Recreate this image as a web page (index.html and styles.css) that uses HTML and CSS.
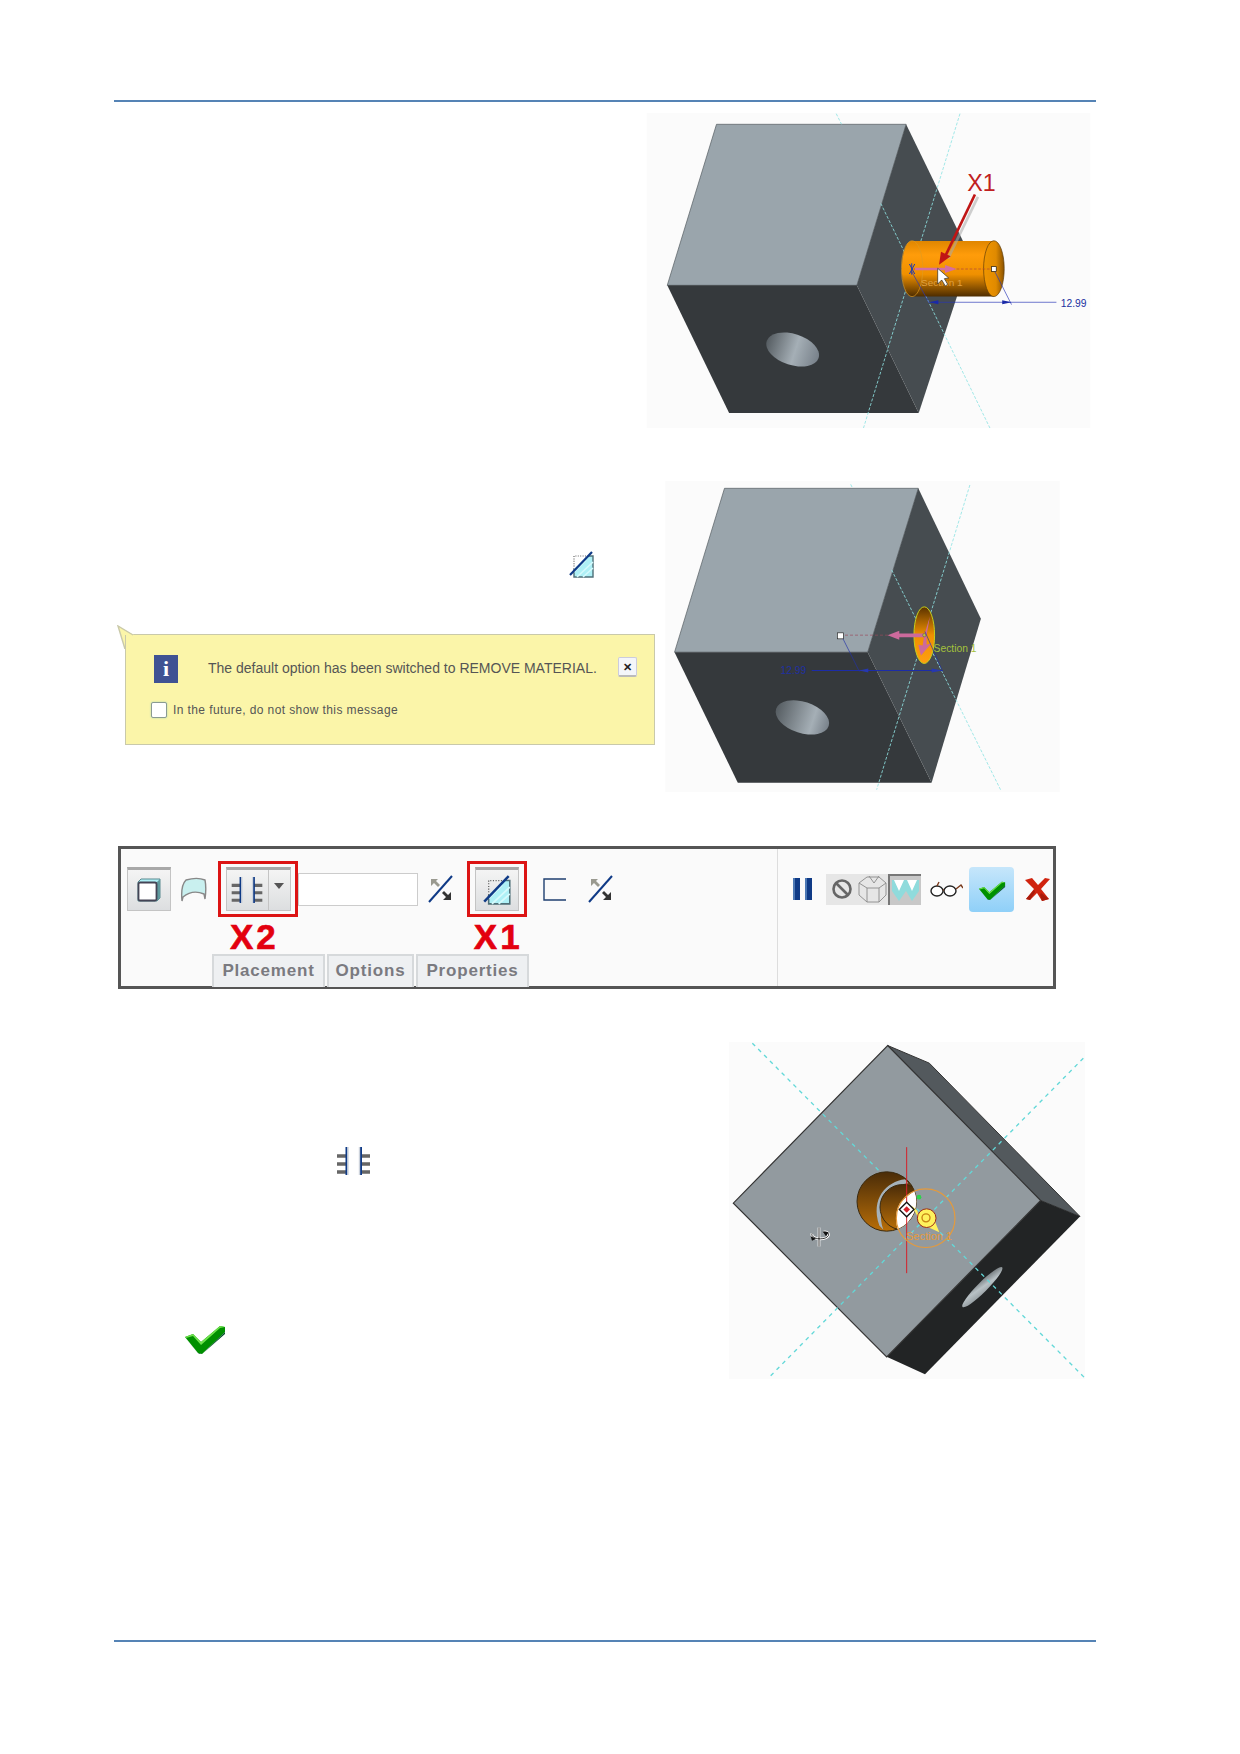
FILE: index.html
```html
<!DOCTYPE html>
<html lang="en">
  <head>
    <meta charset="UTF-8">
    <title>Extrude Cut Steps</title>
    <link rel="stylesheet" href="styles.css">
  </head>
  <body>
    <!-- Shared toolbar icons -->
    <svg class="icon-defs">
      <symbol id="ribs" viewBox="0 0 33 28">
        <path d="M0 9h9M0 17h9M0 25h9M24 9h9M24 17h9M24 25h9" stroke="#666" stroke-width="3.4"/>
        <path d="M9.5 0v28M24 0v28" stroke="#0f3a86" stroke-width="2"/>
        <path d="M11 0v28M22.5 0v28" stroke="#cdd3dc" stroke-width="1.4"/>
      </symbol>
      <symbol id="wedge" viewBox="0 0 25 27">
        <path d="M5 18V5H19" stroke="#666" stroke-width="1.2" stroke-dasharray="1 1.4" fill="none"/>
        <path d="M5 26V18L19 5H24V26z" fill="#aef0f6"/>
        <path d="M5 18V26H24V5H19" fill="none" stroke="#4f6f78" stroke-width="1.4"/>
        <path d="M8 26L24 11M14 26L24 17M5 21L17 9" stroke="#d6fafc" stroke-width="1.6"/>
        <path d="M1 24L23 1" stroke="#0f3a86" stroke-width="2.2"/>
      </symbol>
      <symbol id="flip" viewBox="0 0 25 28">
        <path d="M1 27L24 1" stroke="#0f3a86" stroke-width="2"/>
        <path d="M3 4h7l-2 2 4 4-2 2-4-4-3 3z" fill="#9a9a90"/>
        <path d="M23 25h-8l3-3-4-4 2-2 4 4 3-3z" fill="#333"/>
      </symbol>
      <symbol id="check" viewBox="0 0 40 32">
        <path d="M0 15L8 12L16 20L35 4L40 5V10L17 32L13 31z" fill="#009000"/>
        <path d="M0 15L8 12L16 20L35 4L40 5L35 6L16 23L8 14L1 16z" fill="#6ee24c"/>
        <path d="M0 16L13 31L17 32L40 10V12L17 32H14z" fill="#04502a"/>
      </symbol>
    </svg>

    <div class="page">
      <div class="rule"></div>

      <!-- Step 1 -->
      <section class="step step-one">
        <svg class="fig fig-one" viewBox="18 38 1334 947">
          <defs>
            <linearGradient id="holeA" x1="0" x2="1" y1="0" y2="0">
              <stop offset="0" stop-color="#565d62"/>
              <stop offset=".55" stop-color="#a5afb6"/>
              <stop offset="1" stop-color="#78818a"/>
            </linearGradient>
            <linearGradient id="cyl" x1="0" x2="0" y1="0" y2="1">
              <stop offset="0" stop-color="#e08600"/>
              <stop offset=".25" stop-color="#ff9c0a"/>
              <stop offset=".6" stop-color="#ef9000"/>
              <stop offset="1" stop-color="#4d2c00"/>
            </linearGradient>
            <linearGradient id="cap" x1="0" x2="1" y1="0" y2="0">
              <stop offset="0" stop-color="#f09600"/>
              <stop offset=".6" stop-color="#e08a00"/>
              <stop offset="1" stop-color="#8a5200"/>
            </linearGradient>
          </defs>
          <rect x="18" y="38" width="1334" height="947" fill="#fbfbfb"/>
          <path d="M228 72H798L650 556H80z" fill="#9aa5ac" stroke="#50585c" stroke-width="2"/>
          <path d="M80 556H650L836 940H266z" fill="#35393c"/>
          <path d="M798 72L991 468L836 940L650 556z" fill="#464c50"/>
          <ellipse cx="457" cy="749" rx="82" ry="47" transform="rotate(18 457 749)" fill="url(#holeA)"/>
          <path d="M588 40L604 72M722 310L1050 985M960 40L670 985" stroke="#8fe3e3" stroke-width="2.5" stroke-dasharray="9 5" fill="none"/>
          <path d="M812 423H1062V590H812A30 84 0 0 1 812 423z" fill="url(#cyl)"/>
          <ellipse cx="816" cy="506" rx="32" ry="84" fill="none" stroke="#e09a20" stroke-width="2"/>
          <ellipse cx="1062" cy="506" rx="31" ry="84" fill="url(#cap)" stroke="#5a3a08" stroke-width="2"/>
          <text class="fig-text" x="843" y="558" font-size="30" fill="#e0a040">Section 1</text>
          <path d="M820 507H1060" stroke="#b0443c" stroke-width="2" stroke-dasharray="8 5"/>
          <path d="M825 503H915V495L950 507L915 519V511H825z" fill="#d36fa0"/>
          <path d="M815 490V524M808 492L824 522M824 492L808 522" stroke="#1f3ab0" stroke-width="3"/>
          <path d="M815 515L868 610M1065 515L1115 614M868 607H1250" stroke="#2836b8" stroke-width="2" fill="none"/>
          <path d="M868 607L895 601V613zM1115 607L1087 601V613z" fill="#1a2aa8"/>
          <rect x="1055" y="500" width="14" height="14" fill="#fff" stroke="#111" stroke-width="2"/>
          <text class="fig-text" x="1263" y="620" font-size="31" fill="#2030a0">12.99</text>
          <path d="M893 505V552L905 540L916 558L923 553L913 536L926 534z" fill="#fff" stroke="#222" stroke-width="2"/>
          <path d="M1014 290L924 476" stroke="#aaa" stroke-width="8" opacity=".55"/>
          <path d="M1005 283L915 470" stroke="#c01515" stroke-width="8"/>
          <path d="M897 494L903 455L932 469z" fill="#c01515"/>
          <text class="fig-text" x="982" y="272" font-size="70" fill="#c02020">X1</text>
        </svg>
      </section>

      <!-- Step 2 -->
      <section class="step step-two">
        <div class="step-notes">
          <svg class="wedge-icon"><use href="#wedge"/></svg>
          <div class="note">
            <svg class="note-tail" viewBox="0 0 18 24">
              <path d="M2 1L18 10H14L9 10V24Z" fill="#fbf5a9"/>
              <path d="M9 24L2 1L17 10" fill="none" stroke="#c9c9aa" stroke-width="1.4"/>
            </svg>
            <div class="note-top">
              <span class="note-info">i</span>
              <span class="note-text">The default option has been switched to REMOVE MATERIAL.</span>
              <span class="note-close">✕</span>
            </div>
            <label class="note-bottom">
              <span class="note-check"></span>
              <span>In the future, do not show this message</span>
            </label>
          </div>
        </div>
        <svg class="fig fig-two" viewBox="15 18 1185 934">
          <defs>
            <linearGradient id="holeB" x1="0" x2="1" y1="0" y2="0">
              <stop offset="0" stop-color="#565d62"/>
              <stop offset=".7" stop-color="#a5afb6"/>
              <stop offset="1" stop-color="#78818a"/>
            </linearGradient>
            <linearGradient id="disc" x1="0" x2="0" y1="0" y2="1">
              <stop offset="0" stop-color="#5a3200"/>
              <stop offset=".5" stop-color="#f09000"/>
              <stop offset="1" stop-color="#ff9f10"/>
            </linearGradient>
          </defs>
          <rect x="15" y="18" width="1185" height="934" fill="#fbfbfb"/>
          <path d="M193 40H775L623 532H43z" fill="#9aa5ac" stroke="#50585c" stroke-width="2"/>
          <path d="M43 532H623L815 924H233z" fill="#35393c"/>
          <path d="M775 40L963 432L815 924L623 532z" fill="#464c50"/>
          <ellipse cx="427" cy="728" rx="83" ry="47" transform="rotate(18 427 728)" fill="url(#holeB)"/>
          <path d="M572 28L578 40M695 285L1022 945M930 30L650 945" stroke="#8fe3e3" stroke-width="2.5" stroke-dasharray="9 5" fill="none"/>
          <ellipse cx="793" cy="481" rx="31" ry="85" fill="url(#disc)" stroke="#c6cf1c" stroke-width="3"/>
          <path d="M555 481H690" stroke="#9c4a5c" stroke-width="2" stroke-dasharray="9 6"/>
          <path d="M683 481L718 468V476H793V487H718V495z" fill="#cc6a9c"/>
          <path d="M793 481L810 425L800 480L800 510L815 505L783 542L775 510L788 512z" fill="#cc6a9c"/>
          <circle cx="793" cy="481" r="5" fill="#b8c040" stroke="#333"/>
          <path d="M548 490L598 590M795 470L848 590" stroke="#2232a8" stroke-width="2" fill="none"/>
          <path d="M455 587H848" stroke="#1c2ca8" stroke-width="3.5"/>
          <path d="M598 587L625 581V593zM848 587L815 581V593z" fill="#2638b0"/>
          <rect x="532" y="474" width="18" height="18" fill="#fff" stroke="#222" stroke-width="2"/>
          <text class="fig-text" x="361" y="597" font-size="31" fill="#2030a0">12.99</text>
          <text class="fig-text" x="821" y="533" font-size="31" fill="#a4c23c">Section 1</text>
        </svg>
      </section>

      <!-- Dashboard toolbar -->
      <section class="toolbar">
        <div class="tool-main">
          <div class="tool-row">
            <div class="tool-btn pressed btn-solid">
              <svg width="24" height="24" viewBox="0 0 24 24">
                <path d="M1 4L4 1H23V20L20 23H1z" fill="#aef0f6" stroke="#5a8a90"/>
                <path d="M20 4L23 1V20L20 23z" fill="#5f9a9e"/>
                <rect x="1.5" y="4.5" width="18" height="18" rx="1.5" fill="#fff" stroke="#445" stroke-width="1.8"/>
              </svg>
            </div>
            <svg class="btn-surface" width="27" height="26" viewBox="0 0 27 26">
              <path d="M2 25C1 15 2 8 6 4C13 2 20 2 25 4C26 9 26 16 25 23L24 18C17 15 9 16 3 21z" fill="#c9f0ef" stroke="#888" stroke-width="1.4"/>
            </svg>
            <div class="callout callout-two">
              <div class="tool-btn pressed btn-ribs">
                <svg class="rib-small" width="32" height="26"><use href="#ribs"/></svg>
                <span class="arrow-cell"><span class="btn-arrow"></span></span>
              </div>
            </div>
            <div class="depth-input"></div>
            <svg class="flip-first" width="25" height="28"><use href="#flip"/></svg>
            <div class="callout callout-one">
              <div class="tool-btn pressed btn-cut">
                <svg width="28" height="30"><use href="#wedge"/></svg>
              </div>
            </div>
            <svg class="icon-corner" width="23" height="23" viewBox="0 0 23 23">
              <path d="M23 1H1V22H23" fill="none" stroke="#1f3f70" stroke-width="1.4"/>
            </svg>
            <svg class="flip-last" width="25" height="28"><use href="#flip"/></svg>
          </div>
          <div class="label-row">
            <span class="mark mark-two">X2</span>
            <span class="mark mark-one">X1</span>
          </div>
          <div class="tabs">
            <span class="tab tab-placement">Placement</span>
            <span class="tab tab-options">Options</span>
            <span class="tab tab-properties">Properties</span>
          </div>
        </div>
        <div class="tool-side">
          <svg class="icon-pause" width="19" height="22" viewBox="0 0 19 22">
            <path d="M0 0h7v22H0zM12 0h7v22h-7z" fill="#4c78b4"/>
            <path d="M2 0h5v22H2zM14 0h5v22h-5z" fill="#0f3a86"/>
          </svg>
          <div class="display-group">
            <div class="display-cell">
              <svg width="22" height="22" viewBox="0 0 22 22">
                <circle cx="11" cy="11" r="8.5" fill="none" stroke="#666" stroke-width="2.6"/>
                <path d="M5 5L17 17" stroke="#666" stroke-width="2.6"/>
              </svg>
            </div>
            <div class="display-cell">
              <svg width="31" height="29" viewBox="0 0 31 29">
                <path d="M2 8L10 2H22L29 8V20L22 27H10L2 20zM2 8L10 13V27M29 8L22 13V27M10 13H22M12 1L17 8L22 1" fill="none" stroke="#8a8a8a" stroke-width=".9"/>
              </svg>
            </div>
            <div class="display-cell active">
              <svg width="29" height="27" viewBox="0 0 29 27">
                <path d="M1 3H28V14L21 24L15 14L8 24L1 14z" fill="#8fdbdc"/>
                <path d="M3 3H13L8 14zM16 3H26L21 14z" fill="#fff"/>
              </svg>
            </div>
          </div>
          <svg class="icon-glasses" width="33" height="16" viewBox="0 0 33 16">
            <ellipse cx="7" cy="10" rx="6" ry="5" fill="#fff" stroke="#222" stroke-width="1.4"/>
            <ellipse cx="20" cy="10" rx="6" ry="5" fill="#fff" stroke="#222" stroke-width="1.4"/>
            <path d="M13 9H14M26 8L31 4L33 7M7 5L9 1" fill="none" stroke="#7a3a1c" stroke-width="1.4"/>
          </svg>
          <div class="ok-btn">
            <svg width="28" height="21"><use href="#check"/></svg>
          </div>
          <svg class="icon-cancel" width="25" height="23" viewBox="0 0 25 23">
            <path d="M0 2L7 0L13 7L20 0L25 1L16 11L24 21L17 23L12 15L5 22L1 21L9 11z" fill="#d0230e"/>
            <path d="M1 21L9 12L10 14L5 22zM17 23L15 17L16 15L24 21z" fill="#a81a0a"/>
          </svg>
        </div>
      </section>

      <!-- Step 3 -->
      <section class="step step-three">
        <div class="step-icons">
          <svg class="ribs-icon" width="33" height="28"><use href="#ribs"/></svg>
          <svg class="check-icon" width="40" height="32"><use href="#check"/></svg>
        </div>
        <svg class="fig fig-three" viewBox="27 22 1068 1010">
          <defs>
            <linearGradient id="bore" x1="0" x2="0" y1="0" y2="1">
              <stop offset="0" stop-color="#4a2c08"/>
              <stop offset="1" stop-color="#b86e08"/>
            </linearGradient>
            <linearGradient id="holeC" x1="0" x2="1" y1="1" y2="0">
              <stop offset="0" stop-color="#8a9296"/>
              <stop offset=".5" stop-color="#b9c2c6"/>
              <stop offset="1" stop-color="#5f6568"/>
            </linearGradient>
            <clipPath id="boreClip">
              <circle cx="500" cy="500" r="89"/>
            </clipPath>
          </defs>
          <rect x="27" y="22" width="1068" height="1010" fill="#fbfbfb"/>
          <path d="M503 32L628 85L1080 545L962 497z" fill="#53595d" stroke="#333" stroke-width="3"/>
          <path d="M962 497L1080 545L615 1018L500 966z" fill="#222425"/>
          <path d="M503 32L962 497L500 966L40 505z" fill="#929a9f" stroke="#333" stroke-width="3.5"/>
          <ellipse cx="787" cy="757" rx="84" ry="15" transform="rotate(-45 787 757)" fill="url(#holeC)"/>
          <path d="M97 25L1095 1030M1090 70L145 1030" stroke="#63d8d8" stroke-width="4" stroke-dasharray="12 13" fill="none"/>
          <circle cx="500" cy="500" r="89" fill="url(#bore)" stroke="#3a2a10" stroke-width="3"/>
          <g clip-path="url(#boreClip)">
            <path d="M555 433C500 440 450 490 478 572L490 585C465 510 510 450 565 445z" fill="#a6b2ba"/>
            <circle cx="548" cy="517" r="68" fill="url(#bore)" stroke="#3a2a10" stroke-width="3"/>
            <path d="M590 465C600 500 590 550 535 590C525 560 525 530 540 505C555 490 570 475 590 465z" fill="#fff"/>
          </g>
          <path d="M560 337V715" stroke="#d5202a" stroke-width="3"/>
          <circle cx="617" cy="550" r="88" fill="none" stroke="#e59a3c" stroke-width="3.5"/>
          <path d="M575 512L592 528L600 560L585 530z" fill="#fff25c"/>
          <path d="M560 502L582 524L560 546L538 524z" fill="#fff" stroke="#111" stroke-width="4"/>
          <path d="M550 524L560 514L570 524L560 534z" fill="#d5202a"/>
          <circle cx="597" cy="487" r="7" fill="#2ed44a"/>
          <path d="M632 528L658 592L600 566z" fill="#fff25c"/>
          <circle cx="620" cy="550" r="28" fill="#fff25c" stroke="#9c2a18" stroke-width="3"/>
          <circle cx="618" cy="549" r="12" fill="none" stroke="#c78414" stroke-width="4"/>
          <text class="fig-text" x="558" y="616" font-size="33" fill="#e59a3c">Section 1</text>
          <path d="M297 578V635M276 596C270 615 322 618 326 600C326 592 316 590 310 592" fill="none" stroke="#fff" stroke-width="8"/>
          <path d="M297 578V635M276 596C270 615 322 618 326 600C326 592 316 590 310 592" fill="none" stroke="#111" stroke-width="2.5"/>
          <path d="M272 604L288 612L276 618zM326 592L308 590L318 604z" fill="#111"/>
        </svg>
      </section>

      <div class="rule rule-foot"></div>
    </div>
  </body>
</html>
```

FILE: styles.css
```css
/* Page frame */
body {
  margin: 0;
  background: #fff;
  font-family: "Liberation Sans", Arial, sans-serif;
}

.icon-defs {
  display: none;
}

.page {
  padding: 100px 144px 0 114px;
}

.rule {
  height: 2px;
  background: #5583b5;
}

.rule-foot {
  margin-top: 261px;
}

.fig {
  display: block;
  flex: none;
}

.fig-text {
  font-family: "Liberation Sans", Arial, sans-serif;
}

/* Steps */
.step {
  display: flex;
}

.step-one {
  margin-top: 11px;
  justify-content: flex-end;
  padding-right: 5px;
}

.fig-one {
  width: 445px;
  height: 315px;
}

.step-two {
  margin-top: 53px;
}

.step-notes {
  width: 540px;
  padding-left: 11px;
}

.wedge-icon {
  display: block;
  width: 25px;
  height: 27px;
  margin: 70px 0 0 444px;
}

.fig-two {
  width: 395px;
  height: 311px;
  margin-left: auto;
  margin-right: 36px;
}

.step-three {
  margin-top: 53px;
}

.step-icons {
  width: 500px;
}

.ribs-icon {
  display: block;
  margin: 105px 0 0 223px;
}

.check-icon {
  display: block;
  margin: 147px 0 0 71px;
}

.fig-three {
  width: 356px;
  height: 337px;
  margin-left: auto;
  margin-right: 11px;
}

/* Yellow message */
.note {
  position: relative;
  width: 530px;
  height: 111px;
  box-sizing: border-box;
  margin-top: 56px;
  padding: 20px 17px 0 28px;
  background: #fbf5a9;
  border: 1px solid #c9c9aa;
}

.note-tail {
  position: absolute;
  left: -10px;
  top: -10px;
  width: 18px;
  height: 24px;
}

.note-top {
  display: flex;
  align-items: flex-start;
}

.note-info {
  width: 24px;
  height: 28px;
  background: #3f5293;
  color: #fff;
  font: bold 22px/28px "Liberation Serif", serif;
  text-align: center;
}

.note-text {
  margin: 4px 0 0 30px;
  font-size: 14px;
  line-height: 18px;
  color: #555;
  white-space: nowrap;
}

.note-close {
  width: 19px;
  height: 20px;
  box-sizing: border-box;
  margin: 2px 0 0 auto;
  border: 1px solid #ccd;
  border-bottom: 2px solid #bbb;
  border-radius: 2px;
  background: #f4f6fa;
  color: #222;
  font-size: 11px;
  font-weight: bold;
  line-height: 18px;
  text-align: center;
}

.note-bottom {
  display: flex;
  align-items: center;
  margin: 19px 0 0 -3px;
  font-size: 12px;
  letter-spacing: .4px;
  color: #555;
}

.note-check {
  width: 16px;
  height: 16px;
  box-sizing: border-box;
  margin-right: 6px;
  background: #fff;
  border: 1px solid #8a9a92;
  border-radius: 2px;
  box-shadow: 0 0 2px #9fd3b8;
}

/* Dashboard toolbar */
.toolbar {
  display: flex;
  box-sizing: border-box;
  width: 938px;
  height: 143px;
  margin: 54px 0 0 4px;
  background: #fafafa;
  border: 3px solid #555;
}

.tool-main {
  display: flex;
  flex-direction: column;
  width: 656px;
  padding-top: 12px;
  box-sizing: border-box;
}

.tool-row {
  display: flex;
  align-items: center;
  height: 56px;
  padding-left: 6px;
}

.tool-btn {
  display: flex;
  align-items: center;
  justify-content: center;
  box-sizing: border-box;
  height: 44px;
}

.pressed {
  background: linear-gradient(#f4f4f4, #dcdee0);
  border: 1px solid #c4c4c4;
  border-top: 3px solid #a8a8a8;
}

.btn-solid {
  width: 44px;
}

.btn-surface {
  margin-left: 9px;
}

.callout {
  display: flex;
  align-items: center;
  justify-content: center;
  box-sizing: border-box;
  height: 56px;
  border: 3px solid #dc1414;
  z-index: 1;
}

.callout-two {
  width: 80px;
  margin-left: 11px;
}

.callout-one {
  width: 60px;
  margin-left: 14px;
}

.btn-ribs {
  width: 65px;
  justify-content: flex-start;
  padding-left: 4px;
}

.rib-small {
  flex: none;
}

.arrow-cell {
  display: flex;
  align-items: center;
  justify-content: center;
  align-self: stretch;
  flex: 1;
  margin-left: 5px;
  border-left: 1px solid #c4c4c4;
  padding-bottom: 8px;
}

.btn-arrow {
  width: 0;
  height: 0;
  border: 5px solid transparent;
  border-top: 6px solid #555;
  border-bottom: 0;
}

.depth-input {
  width: 120px;
  height: 33px;
  box-sizing: border-box;
  background: #fff;
  border: 1px solid #ccc;
}

.flip-first {
  margin-left: 10px;
}

.btn-cut {
  width: 44px;
}

.icon-corner {
  margin-left: 16px;
}

.flip-last {
  margin-left: 22px;
}

.label-row {
  display: flex;
  height: 33px;
  margin-top: 3px;
  color: #e3000f;
  font-size: 35px;
  font-weight: bold;
  line-height: 33px;
  letter-spacing: 3px;
  -webkit-text-stroke: .6px #e3000f;
}

.mark-two {
  margin-left: 109px;
}

.mark-one {
  margin-left: 195px;
}

.tabs {
  display: flex;
  gap: 2px;
  margin: 1px 0 0 91px;
}

.tab {
  box-sizing: border-box;
  height: 33px;
  background: #eef0f2;
  border: 2px solid #d6d9db;
  border-bottom: 0;
  color: #7a7a80;
  font-size: 17px;
  font-weight: bold;
  letter-spacing: .8px;
  line-height: 30px;
  text-align: center;
}

.tab-placement {
  width: 113px;
}

.tab-options {
  width: 87px;
}

.tab-properties {
  width: 113px;
}

.tool-side {
  display: flex;
  align-items: center;
  height: 56px;
  margin-top: 12px;
  padding-left: 16px;
  position: relative;
}

.tool-side::before {
  content: "";
  position: absolute;
  left: 0;
  top: -12px;
  height: 137px;
  border-left: 1px solid #ddd;
}

.display-group {
  display: flex;
  width: 95px;
  height: 31px;
  margin-left: 14px;
  background: #e6e6e6;
}

.display-cell {
  display: flex;
  flex: 1;
  align-items: center;
  justify-content: center;
  overflow: hidden;
}

.display-cell.active {
  background: #c8c8c8;
  border-top: 2px solid #777;
  border-left: 2px solid #777;
}

.icon-glasses {
  margin-left: 9px;
}

.ok-btn {
  display: flex;
  align-items: center;
  justify-content: center;
  width: 45px;
  height: 45px;
  margin-left: 6px;
  border-radius: 4px;
  background: linear-gradient(#c6e6fb, #8fd0f8);
}

.icon-cancel {
  margin-left: 11px;
}
```
